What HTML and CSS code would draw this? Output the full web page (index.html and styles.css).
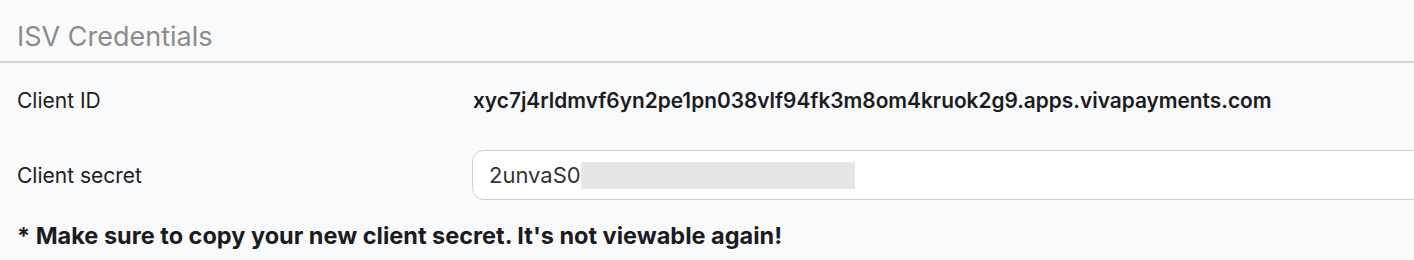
FILE: index.html
```html
<!DOCTYPE html>
<html lang="en">
<head>
  <meta charset="UTF-8">
  <title>ISV Credentials</title>
  <link rel="stylesheet" href="styles.css">
</head>
<body>

  <div class="section-title">ISV Credentials</div>

  <div class="cred-grid">
    <div class="cred-label">Client ID</div>
    <div class="cred-value">xyc7j4rldmvf6yn2pe1pn038vlf94fk3m8om4kruok2g9.apps.vivapayments.com</div>

    <div class="cred-label">Client secret</div>
    <div class="secret-box">
      <span>2unvaS0</span>
      <span class="redacted"></span>
    </div>
  </div>

  <p class="note">* Make sure to copy your new client secret. It's not viewable again!</p>

</body>
</html>
```

FILE: styles.css
```css
body {
  margin: 0;
  padding: 0;
  font-family: Inter, 'Noto Sans', sans-serif;
  background: #f8f9fb;
  color: #1c1c1e;
  overflow: hidden;
}

.section-title {
  font-size: 27px;
  line-height: 32px;
  color: #8c8c8c;
  padding: 21px 17px 0;
  height: 63px;
  box-sizing: border-box;
  border-bottom: 2px solid #d6d6d8;
}

.cred-grid {
  display: grid;
  grid-template-columns: 455px 1fr;
  align-items: center;
  padding-left: 17px;
  margin-top: 25px;
  row-gap: 37px;
}

.cred-label {
  font-size: 21px;
  line-height: 25px;
}

.cred-value {
  font-size: 20.85px;
  line-height: 25px;
  font-weight: 600;
  padding-left: 1px;
}

.secret-box {
  display: flex;
  align-items: center;
  height: 50px;
  box-sizing: border-box;
  margin-right: -20px;
  padding-left: 16px;
  background: #fff;
  border: 1px solid #cfcfd2;
  border-radius: 12px;
  font-size: 22px;
  color: #333;
}

.redacted {
  display: inline-block;
  width: 274px;
  height: 27px;
  background: #e6e6e6;
}

.note {
  margin: 22px 0 0;
  padding-left: 17px;
  font-size: 23.5px;
  line-height: 28px;
  font-weight: 700;
}
```
